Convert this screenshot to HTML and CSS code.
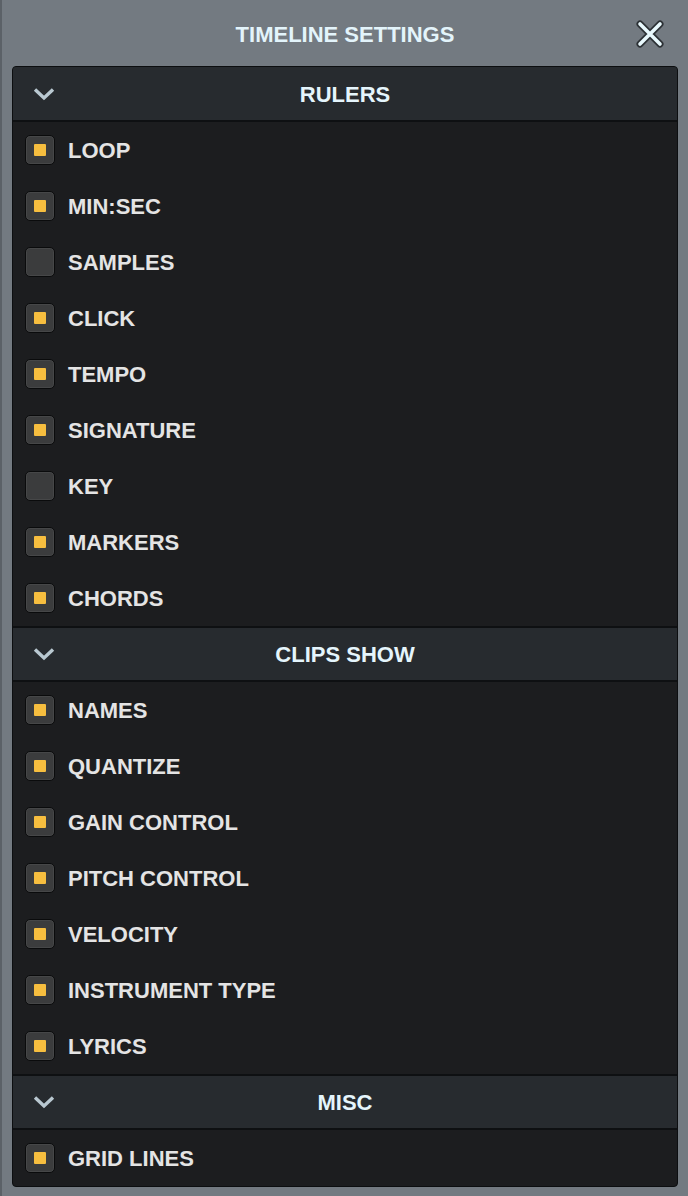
FILE: index.html
```
<!DOCTYPE html>
<html>
<head>
<meta charset="utf-8">
<link rel="stylesheet" href="styles.css">
</head>
<body>
<div class="titlebar">
  <div></div>
  <div class="title">TIMELINE SETTINGS</div>
  <div class="close-wrap">
    <svg class="close" width="28" height="28" viewBox="0 0 28 28">
      <path d="M4 4 L24 24 M24 4 L4 24" stroke="#2c3135" stroke-width="7" stroke-linecap="round" fill="none"/>
      <path d="M4 4 L24 24 M24 4 L4 24" stroke="#e9f9fd" stroke-width="3.6" stroke-linecap="round" fill="none"/>
    </svg>
  </div>
</div>
<div class="panel">
  <div class="header first">
    <div class="chev-col"><svg width="22" height="14" viewBox="0 0 22 14"><polyline points="2,2.5 11,11 20,2.5" stroke="#b9c8d1" stroke-width="3.4" fill="none"/></svg></div>
    <div class="htitle">RULERS</div>
    <div></div>
  </div>
  <div class="row"><span class="cb on"></span><span class="label">LOOP</span></div>
  <div class="row"><span class="cb on"></span><span class="label">MIN:SEC</span></div>
  <div class="row"><span class="cb"></span><span class="label">SAMPLES</span></div>
  <div class="row"><span class="cb on"></span><span class="label">CLICK</span></div>
  <div class="row"><span class="cb on"></span><span class="label">TEMPO</span></div>
  <div class="row"><span class="cb on"></span><span class="label">SIGNATURE</span></div>
  <div class="row"><span class="cb"></span><span class="label">KEY</span></div>
  <div class="row"><span class="cb on"></span><span class="label">MARKERS</span></div>
  <div class="row"><span class="cb on"></span><span class="label">CHORDS</span></div>
  <div class="header">
    <div class="chev-col"><svg width="22" height="14" viewBox="0 0 22 14"><polyline points="2,2.5 11,11 20,2.5" stroke="#b9c8d1" stroke-width="3.4" fill="none"/></svg></div>
    <div class="htitle">CLIPS SHOW</div>
    <div></div>
  </div>
  <div class="row"><span class="cb on"></span><span class="label">NAMES</span></div>
  <div class="row"><span class="cb on"></span><span class="label">QUANTIZE</span></div>
  <div class="row"><span class="cb on"></span><span class="label">GAIN CONTROL</span></div>
  <div class="row"><span class="cb on"></span><span class="label">PITCH CONTROL</span></div>
  <div class="row"><span class="cb on"></span><span class="label">VELOCITY</span></div>
  <div class="row"><span class="cb on"></span><span class="label">INSTRUMENT TYPE</span></div>
  <div class="row"><span class="cb on"></span><span class="label">LYRICS</span></div>
  <div class="header">
    <div class="chev-col"><svg width="22" height="14" viewBox="0 0 22 14"><polyline points="2,2.5 11,11 20,2.5" stroke="#b9c8d1" stroke-width="3.4" fill="none"/></svg></div>
    <div class="htitle">MISC</div>
    <div></div>
  </div>
  <div class="row"><span class="cb on"></span><span class="label">GRID LINES</span></div>
</div>
</body>
</html>
```
FILE: styles.css
```
html, body {
  margin: 0;
  padding: 0;
}
body {
  width: 688px;
  height: 1196px;
  box-sizing: border-box;
  background: #737a81;
  border-left: 2px solid #5b6167;
  font-family: "Liberation Sans", Arial, sans-serif;
  font-weight: bold;
  overflow: hidden;
}
.titlebar {
  height: 66px;
  display: grid;
  grid-template-columns: 1fr auto 1fr;
  align-items: center;
}
.title {
  font-size: 22px;
  color: #e3f4fb;
  padding-top: 3px;
}
.close-wrap {
  display: flex;
  justify-content: flex-end;
  padding-right: 24px;
  padding-top: 2px;
}
.close {
  display: block;
}
.panel {
  margin: 0 10px 0 10px;
  border: 1px solid #0c0e10;
  border-radius: 4px;
  overflow: hidden;
  background: #1c1d1f;
}
.header {
  height: 56px;
  box-sizing: border-box;
  background: #272b2f;
  border-top: 2px solid #0e1012;
  border-bottom: 2px solid #0e1012;
  display: grid;
  grid-template-columns: 1fr auto 1fr;
  align-items: center;
}
.header.first {
  height: 55px;
  border-top: none;
}
.chev-col {
  padding-left: 20px;
  display: flex;
  align-items: center;
}
.chev-col svg {
  display: block;
}
.htitle {
  font-size: 22px;
  color: #e5f5fc;
  padding-top: 2px;
}
.row {
  height: 56px;
  display: flex;
  align-items: center;
  padding-left: 12px;
}
.cb {
  width: 30px;
  height: 30px;
  box-sizing: border-box;
  border: 1.5px solid #0a0b0c;
  border-radius: 5px;
  background: #3b3c3d;
  box-shadow: inset 0 0 0 1px #464748;
  display: flex;
  align-items: center;
  justify-content: center;
  flex-shrink: 0;
}
.cb.on::after {
  content: "";
  width: 12px;
  height: 12px;
  background: #f7be3f;
  border-radius: 1px;
}
.label {
  margin-left: 13px;
  font-size: 22px;
  color: #e4e4e4;
  padding-top: 2px;
}
```
